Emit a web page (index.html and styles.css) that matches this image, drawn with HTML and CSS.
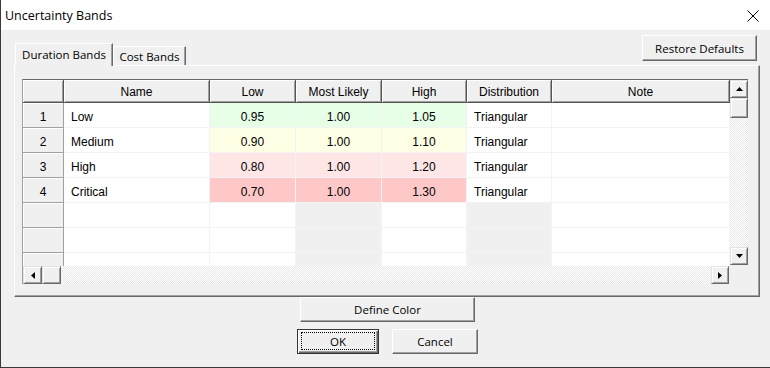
FILE: index.html
```html
<!DOCTYPE html>
<html>
<head>
<meta charset="utf-8">
<link rel="stylesheet" href="styles.css">
</head>
<body>
<div class="window">
  <div class="titlebar">
    <span class="title">Uncertainty Bands</span>
    <svg class="close" width="12" height="12" viewBox="0 0 12 12"><path d="M0.5 0.5 L11.5 11.5 M11.5 0.5 L0.5 11.5" stroke="#000" stroke-width="1" fill="none"/></svg>
  </div>
  <div class="tabrow">
    <div class="tabs">
      <div class="tab active">Duration Bands</div>
      <div class="tab">Cost Bands</div>
    </div>
    <div class="btn restore">Restore Defaults</div>
  </div>
  <div class="panel">
    <div class="frame">
      <div class="gmain">
        <div class="cells">
          <div class="hc"></div><div class="hc">Name</div><div class="hc">Low</div><div class="hc">Most Likely</div><div class="hc">High</div><div class="hc">Distribution</div><div class="hc">Note</div>

          <div class="rh">1</div><div class="c">Low</div><div class="c num green">0.95</div><div class="c num green">1.00</div><div class="c num green">1.05</div><div class="c">Triangular</div><div class="c"></div>
          <div class="rh">2</div><div class="c">Medium</div><div class="c num yellow">0.90</div><div class="c num yellow">1.00</div><div class="c num yellow">1.10</div><div class="c">Triangular</div><div class="c"></div>
          <div class="rh">3</div><div class="c">High</div><div class="c num pink">0.80</div><div class="c num pink">1.00</div><div class="c num pink">1.20</div><div class="c">Triangular</div><div class="c"></div>
          <div class="rh">4</div><div class="c">Critical</div><div class="c num red">0.70</div><div class="c num red">1.00</div><div class="c num red">1.30</div><div class="c">Triangular</div><div class="c"></div>

          <div class="rh"></div><div class="c"></div><div class="c"></div><div class="c ro"></div><div class="c"></div><div class="c ro"></div><div class="c"></div>
          <div class="rh"></div><div class="c"></div><div class="c"></div><div class="c ro"></div><div class="c"></div><div class="c ro"></div><div class="c"></div>
          <div class="rh"></div><div class="c"></div><div class="c"></div><div class="c ro"></div><div class="c"></div><div class="c ro"></div><div class="c"></div>
        </div>
        <div class="vscroll">
          <div class="sb"><svg width="7" height="4" viewBox="0 0 7 4"><polygon points="3.5,0 7,4 0,4" fill="#000"/></svg></div>
          <div class="sb vthumb"></div>
          <div class="track"></div>
          <div class="sb down"><svg width="7" height="4" viewBox="0 0 7 4"><polygon points="0,0 7,0 3.5,4" fill="#000"/></svg></div>
        </div>
      </div>
      <div class="hbar">
        <div class="hscroll">
          <div class="sb left"><svg width="4" height="7" viewBox="0 0 4 7"><polygon points="4,0 4,7 0,3.5" fill="#000"/></svg></div>
          <div class="sb hthumb"></div>
          <div class="track"></div>
          <div class="sb right"><svg width="4" height="7" viewBox="0 0 4 7"><polygon points="0,0 4,3.5 0,7" fill="#000"/></svg></div>
        </div>
        <div class="corner"></div>
      </div>
    </div>
  </div>
  <div class="actions">
    <div class="btn define">Define Color</div>
    <div class="okrow">
      <div class="btn ok"><span class="focus">OK</span></div>
      <div class="btn cancel">Cancel</div>
    </div>
  </div>
</div>
</body>
</html>
```
FILE: styles.css
```css
html, body {
  margin: 0;
  padding: 0;
  background: #f0f0f0;
}

.window {
  width: 770px;
  height: 368px;
  box-sizing: border-box;
  border-left: 1px solid #3a3a3a;
  border-bottom: 1px solid #3a3a3a;
  background: #f0f0f0;
  display: flex;
  flex-direction: column;
  overflow: hidden;
}

.titlebar {
  height: 30px;
  flex: none;
  background: #fff;
  display: flex;
  align-items: center;
  justify-content: space-between;
  padding: 0 11px 0 4px;
}

.title {
  font: 12.5px "Open Sans", sans-serif;
  color: #000;
}

.close {
  display: block;
  margin-top: 1px;
}

.tabrow {
  height: 35px;
  flex: none;
  display: flex;
  justify-content: space-between;
  padding: 0 13px 0 14px;
}

.tabs {
  display: flex;
  align-items: flex-end;
  align-self: flex-end;
  margin-bottom: -1px;
  position: relative;
  z-index: 1;
}

.tab {
  box-sizing: border-box;
  height: 19px;
  width: 73px;
  margin-bottom: 1px;
  border-top: 1px solid #fff;
  border-left: 1px solid #fff;
  border-right: 1px solid #696969;
  box-shadow: inset -1px 0 #a0a0a0;
  background: #f0f0f0;
  display: flex;
  align-items: center;
  justify-content: center;
  font: 11.5px "Open Sans", sans-serif;
  color: #000;
  padding-top: 1px;
}

.tab.active {
  height: 23px;
  width: 98px;
  margin-bottom: 0;
  padding-top: 0;
  padding-bottom: 2px;
}

.btn {
  box-sizing: border-box;
  background: #f0f0f0;
  border: 1px solid;
  border-color: #fff #696969 #696969 #fff;
  box-shadow: inset -1px -1px #a0a0a0, inset 1px 1px #f0f0f0;
  display: flex;
  align-items: center;
  justify-content: center;
  font: 11.5px "Open Sans", sans-serif;
  color: #000;
  height: 25px;
}

.restore {
  margin-top: 5px;
  width: 115px;
  height: 26px;
}

.panel {
  margin-left: 13px;
  width: 746px;
  height: 232px;
  flex: none;
  box-sizing: border-box;
  border: 1px solid;
  border-color: #fff #696969 #696969 #fff;
  box-shadow: inset -1px -1px #a0a0a0;
  padding: 13px 0 0 7px;
}

.frame {
  width: 726px;
  height: 205px;
  box-sizing: border-box;
  border-top: 1px solid #696969;
  border-left: 1px solid #a0a0a0;
  display: flex;
  flex-direction: column;
}

.gmain {
  display: flex;
  height: 186px;
  flex: none;
}

.cells {
  width: 707px;
  height: 186px;
  overflow: hidden;
  display: grid;
  grid-template-columns: 41px 146px 86px 86px 85px 85px 178px;
  grid-template-rows: 23px;
  grid-auto-rows: 25px;
  align-content: start;
  background: #fff;
  font: 12px "Liberation Sans", Arial, sans-serif;
  color: #000;
}

.hc {
  box-sizing: border-box;
  background: #f0f0f0;
  border-right: 1px solid #555;
  border-bottom: 1px solid #555;
  box-shadow: inset 1px 1px #fff, inset -1px -1px #a0a0a0;
  display: flex;
  align-items: center;
  justify-content: center;
  padding-top: 2px;
}

.rh {
  box-sizing: border-box;
  background: #f0f0f0;
  border-right: 1px solid #a0a0a0;
  border-bottom: 1px solid #a0a0a0;
  box-shadow: inset 1px 1px #fff;
  display: flex;
  align-items: center;
  justify-content: center;
  padding-top: 3px;
}

.c {
  box-sizing: border-box;
  border-right: 1px solid #f3f3f3;
  border-bottom: 1px solid #f3f3f3;
  display: flex;
  align-items: center;
  padding-left: 7px;
  padding-top: 3px;
  white-space: nowrap;
}

.c.num {
  justify-content: center;
  padding-left: 0;
}

.green { background: #e6ffe6; }
.yellow { background: #ffffe6; }
.pink { background: #ffe6e6; }
.red { background: #ffc8c8; }
.ro { background: #f0f0f0; }

.vscroll {
  width: 18px;
  display: flex;
  flex-direction: column;
}

.sb {
  box-sizing: border-box;
  width: 18px;
  height: 18px;
  flex: none;
  background: #f0f0f0;
  border: 1px solid;
  border-color: #e3e3e3 #696969 #696969 #e3e3e3;
  box-shadow: inset 1px 1px #fff, inset -1px -1px #a0a0a0;
  display: flex;
  align-items: center;
  justify-content: center;
}

.sb svg {
  display: block;
}

.vthumb {
  height: 20px;
}

.sb.down {
  margin-bottom: 1px;
}

.track {
  flex: 1;
  background: repeating-conic-gradient(#fff 0 25%, #e8e8e8 0 50%) 0 0 / 2px 2px;
}

.hbar {
  display: flex;
  height: 18px;
  flex: none;
}

.hscroll {
  width: 707px;
  display: flex;
}

.sb.left {
  width: 19px;
}

.hthumb {
  width: 19px;
}

.sb.right {
  margin-right: 1px;
}

.corner {
  width: 18px;
  background: #f0f0f0;
}

.actions {
  display: flex;
  flex-direction: column;
  align-items: center;
  gap: 7px;
  padding-left: 4px;
}

.define {
  width: 175px;
}

.okrow {
  display: flex;
  gap: 13px;
}

.ok {
  width: 82px;
  border-color: #333;
  box-shadow: inset 1px 1px #fff, inset -1px -1px #696969, inset -2px -2px #a0a0a0;
  padding: 2px 3px 3px 3px;
  align-items: stretch;
}

.focus {
  flex: 1;
  border: 1px dotted #000;
  display: flex;
  align-items: center;
  justify-content: center;
}

.cancel {
  width: 86px;
}
```
